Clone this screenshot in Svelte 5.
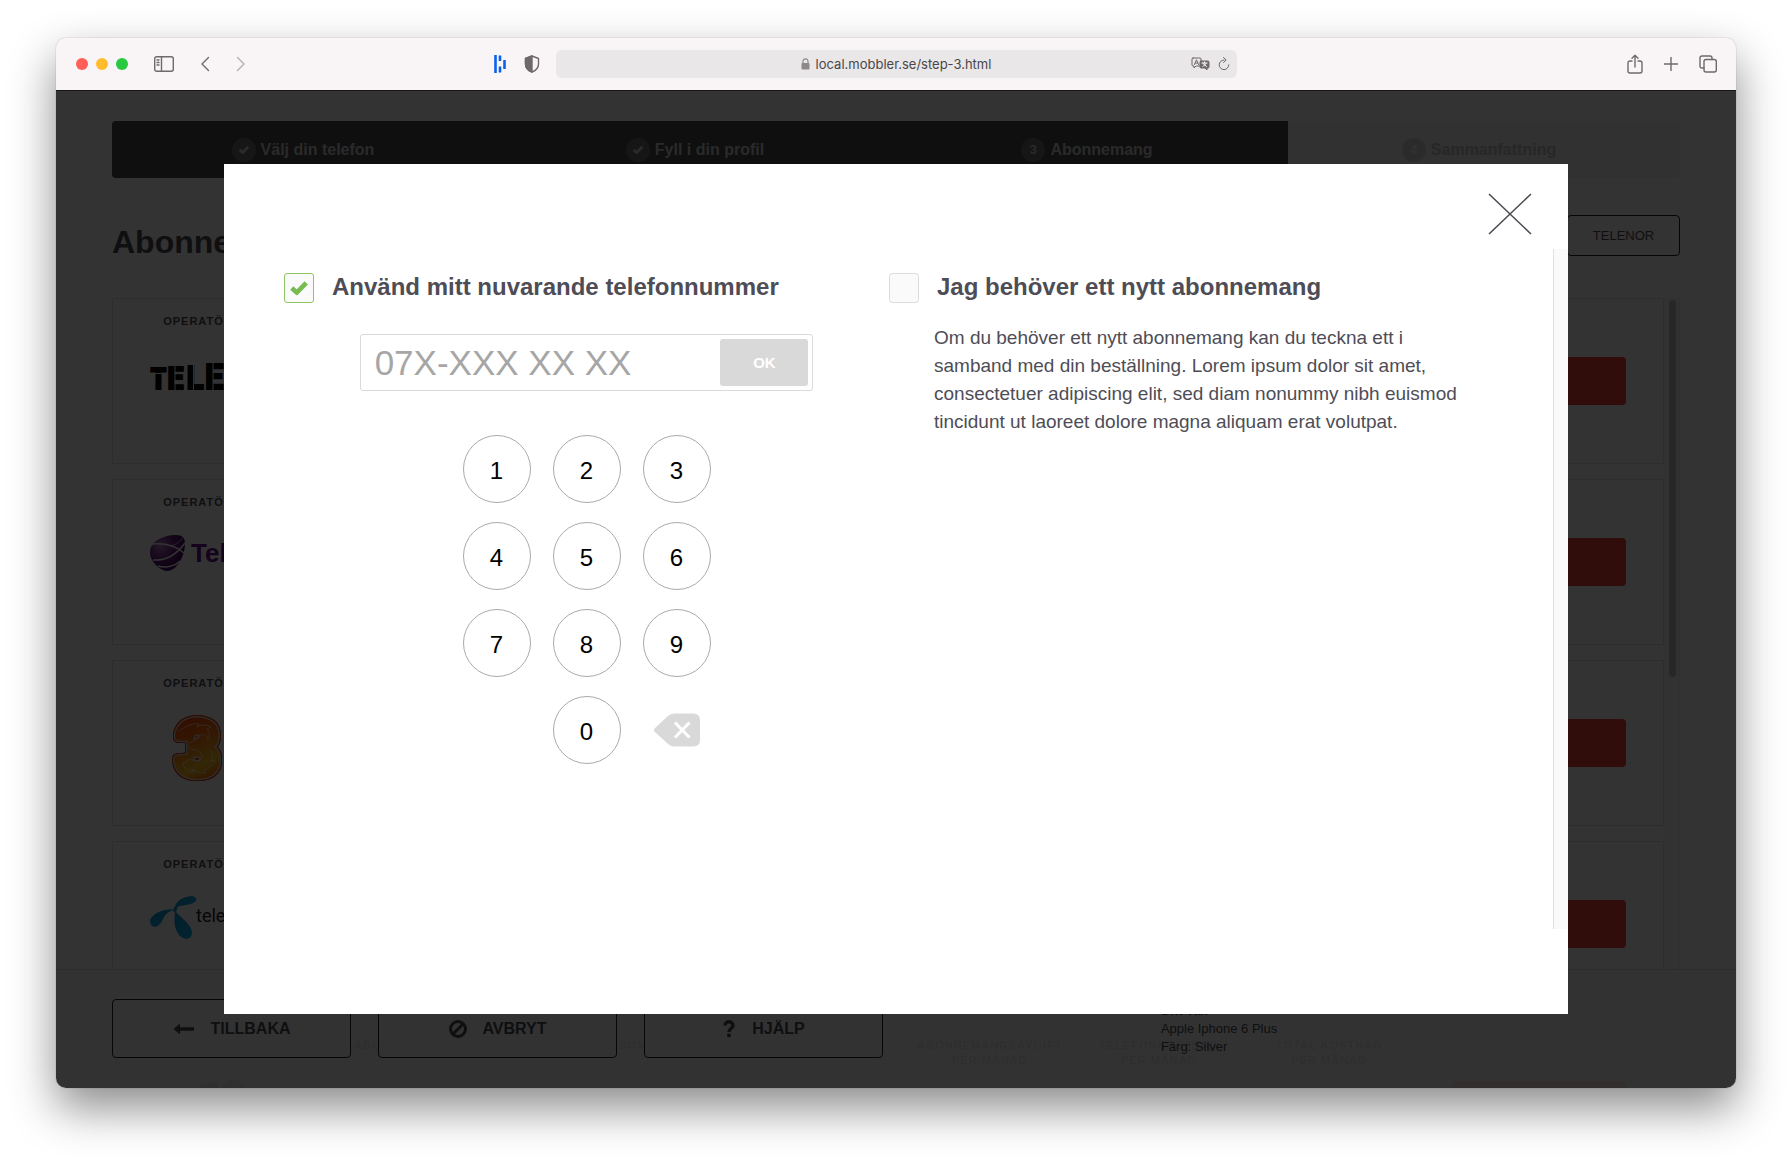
<script lang="ts">
  type Step = { label: string; done: boolean; active: boolean };

  const steps: Step[] = [
    { label: 'Välj din telefon', done: true, active: true },
    { label: 'Fyll i din profil', done: true, active: true },
    { label: 'Abonnemang', done: false, active: true },
    { label: 'Sammanfattning', done: false, active: false }
  ];

  const operators = ['tele2', 'telia', 'tre', 'telenor', 'other'];

  const columns = [
    'Abonnemang',
    'Vad som ingår',
    '',
    'Abonnemangsavgift\nper månad',
    'Telefonkostnad\nper månad',
    'Total kostnad\nper månad'
  ];

  const digits = ['1', '2', '3', '4', '5', '6', '7', '8', '9', '0'];

  let phone = $state('');
  let choice = $state('current');
  let open = $state(true);

  function press(digit: string) {
    if (phone.length < 10) phone += digit;
  }

  function erase() {
    phone = phone.slice(0, -1);
  }
</script>

{#snippet tick()}
  <svg class="tick" viewBox="0 0 18 14" aria-hidden="true">
    <path d="M2.5 7.2 L7 11.4 L15.5 2.6" fill="none" stroke="currentColor" stroke-width="4.2" stroke-linejoin="round" />
  </svg>
{/snippet}

{#snippet logo(name: string)}
  <svg class="logo" width="96" height="72" viewBox="0 0 96 72" aria-hidden="true">
    {#if name === 'tele2'}
      <text class="tele2" x="0" y="38" fill="#050505" stroke="#050505" stroke-width="2"><tspan font-size="28">T</tspan><tspan font-size="30">E</tspan><tspan font-size="32">L</tspan><tspan font-size="34">E</tspan><tspan font-size="36">2</tspan></text>
      <path d="M2 22.500 H16 M25 14 V40 M43.500 14 V40 M63 12 V40" stroke="#fff" stroke-width="1" />
    {:else if name === 'telia'}
      <defs>
        <radialGradient id="sphere" cx="0.3" cy="0.3" r="0.8">
          <stop offset="0" stop-color="#b57cc4" />
          <stop offset="0.5" stop-color="#6a1a80" />
          <stop offset="1" stop-color="#3a0050" />
        </radialGradient>
      </defs>
      <path d="M0 19 C1 9 14 3 26 3 C33 3 35 6 35 12 C35 22 28 39 17 39 C9 39 -1 28 0 19 Z" fill="url(#sphere)" />
      <path d="M2 12 C14 11 26 14 34 21 M3 28 C16 29 27 22 35 11 M8 34 C15 36 24 35 30 29" fill="none" stroke="#fff" stroke-width="1.500" />
      <path d="M20 14 C26 13 31 9 33 5" fill="none" stroke="#fff" stroke-opacity="0.6" />
      <text class="telia" x="41" y="30" font-size="26" fill="#6a0a8a">Telia</text>
    {:else if name === 'tre'}
      <defs>
        <linearGradient id="flame" x1="0" y1="0" x2="0.25" y2="1">
          <stop offset="0" stop-color="#ff2a00" />
          <stop offset="0.5" stop-color="#ff7a10" />
          <stop offset="0.8" stop-color="#ffc020" />
          <stop offset="1" stop-color="#ff6a00" />
        </linearGradient>
      </defs>
      <text class="tre" x="27" y="61" font-size="74" fill="url(#flame)" stroke="url(#flame)" stroke-width="9" stroke-linejoin="round">3</text>
      <path d="M28 19 C36 12 44 10 49 11 L47 14 C52 11 57 12 61 14 L57 16 C60 19 60 23 58 27 C57 22 53 20 48 23 C46 29 36 29 38 34 C42 38 53 36 52 44 C48 54 38 42 38 48 L33 50 C33 55 38 59 44 59 L42 56 C48 60 52 59 55 61 L54 57 C60 55 63 50 65 47 L61 48 C64 43 62 40 59 37" fill="none" stroke="#fff" stroke-opacity="0.6" stroke-width="1" />
    {:else if name === 'telenor'}
      <defs>
        <linearGradient id="petal" x1="0" y1="0" x2="1" y2="1">
          <stop offset="0" stop-color="#0a9ad0" />
          <stop offset="1" stop-color="#12b0f0" />
        </linearGradient>
      </defs>
      <g fill="url(#petal)">
        <path d="M25 14 C25 7 34 2 42 2 C48 3 48 8 41 10 C35 12 29 11 25 14 Z" />
        <path d="M24 16 C15 14 0 20 0 28 C1 35 9 34 12 27 C15 20 19 17 24 16 Z" />
        <path d="M25 17 C24 27 24 34 29 41 C33 46 42 47 42 38 C41 30 32 25 25 17 Z" />
        <path d="M23 17 C23 13 26 11 28 12 L26 19 Z" />
      </g>
      <text class="telenor" x="46" y="28" font-size="18" fill="#222">telenor</text>
    {:else}
      <path d="M50 9 L68 6 L69 30 H54 Z" fill="#777" />
      <circle cx="83" cy="16" r="12" fill="#777" />
    {/if}
  </svg>
{/snippet}

<div class="window">
  <header class="toolbar">
    <div class="side">
      <div class="lights"><i class="red"></i><i class="amber"></i><i class="green"></i></div>
      <button class="tool sidebar" aria-label="Sidebar">
        <svg width="20" height="16" viewBox="0 0 20 16"><rect x="0.700" y="0.700" width="18.600" height="14.600" rx="2" /><path d="M7.500 1 V15 M3 4 H5 M3 6.500 H5 M3 9 H5" /></svg>
      </button>
      <button class="tool" aria-label="Back">
        <svg width="10" height="16" viewBox="0 0 10 16"><path d="M8.500 1.500 L2 8 L8.500 14.500" /></svg>
      </button>
      <button class="tool faded" aria-label="Forward">
        <svg width="10" height="16" viewBox="0 0 10 16"><path d="M1.500 1.500 L8 8 L1.500 14.500" /></svg>
      </button>
    </div>
    <div class="center">
      <button class="tool" aria-label="Extension">
        <svg class="bars" width="14" height="20" viewBox="0 0 14 20"><path d="M1.500 1 V19 M6 1.500 V7 M6 12.500 V18.500 M10.500 6 V15" /></svg>
      </button>
      <button class="tool" aria-label="Privacy report">
        <svg width="16" height="18" viewBox="0 0 16 18"><path d="M8 1 L14.500 3.500 V9 C14.500 13 12 15.500 8 17 C4 15.500 1.500 13 1.500 9 V3.500 Z" /><path d="M8 1 V17 C4 15.500 1.500 13 1.500 9 V3.500 Z" fill="#6f696b" /></svg>
      </button>
      <div class="address">
        <span class="url">
          <svg width="9" height="12" viewBox="0 0 9 12"><rect x="0.500" y="5" width="8" height="6.500" rx="1" fill="#8d898b" /><path d="M2 5.500 V3.200 C2 0.200 7 0.200 7 3.200 V5.500" fill="none" stroke="#8d898b" stroke-width="1.200" /></svg>
          local.mobbler.se/step-3.html
        </span>
        <svg class="translate" width="19" height="14" viewBox="0 0 19 14"><path d="M2 1 H9 Q10 1 10 2 V8 Q10 9 9 9 H5 L3 11 V9 H2 Q1 9 1 8 V2 Q1 1 2 1 Z" /><path d="M3.500 7.500 L5.500 2.800 L7.500 7.500 M4.200 6 H6.800" /><path d="M10 4 H17 Q18 4 18 5 V10 Q18 11 17 11 H16 V13 L14 11 H10 Q9 11 9 10 V5 Q9 4 10 4 Z" fill="#6f696b" /><path d="M11 6 H16 M13.500 5 V6 M12 9.500 L15 6.500 M12 6.500 L15.500 9.500" stroke="#fff" /></svg>
        <svg width="12" height="14" viewBox="0 0 12 14"><path d="M6 3 A4.800 4.800 0 1 0 10.800 7.800 M5.500 0.500 L8.200 3 L5.500 5.500" /></svg>
      </div>
    </div>
    <div class="side end">
      <button class="tool" aria-label="Share">
        <svg width="16" height="20" viewBox="0 0 16 20"><path d="M5 7 H3 Q1 7 1 9 V17 Q1 19 3 19 H13 Q15 19 15 17 V9 Q15 7 13 7 H11 M8 13 V1.500 M5 4.300 L8 1.300 L11 4.300" /></svg>
      </button>
      <button class="tool" aria-label="New tab">
        <svg width="14" height="14" viewBox="0 0 14 14"><path d="M7 0 V14 M0 7 H14" /></svg>
      </button>
      <button class="tool" aria-label="Tab overview">
        <svg width="18" height="18" viewBox="0 0 18 18"><rect x="5" y="4.500" width="12.300" height="12.500" rx="2" /><path d="M5 13 H3 Q1 13 1 11 V3 Q1 1 3 1 H11 Q13 1 13 3 V4.500" /></svg>
      </button>
    </div>
  </header>

  <div class="page">
    <main class="content">
      <ol class="steps">
        {#each steps as step, i}
          <li class:active={step.active}>
            <span class="bullet">{#if step.done}{@render tick()}{:else}{i + 1}{/if}</span>
            {step.label}
          </li>
        {/each}
      </ol>

      <div class="title">
        <h1>Abonnemang</h1>
        <button class="filter">TELENOR</button>
      </div>

      <div class="list">
        <div class="cards">
          {#each operators as name}
            <article class="card">
              <div class="cell">
                <h2>Operatör</h2>
                {@render logo(name)}
              </div>
              {#each columns as column}
                <div class="cell"><h2>{column}</h2></div>
              {/each}
              <div class="cell action"><button class="choose" aria-label="Välj"></button></div>
            </article>
          {/each}
        </div>
        <div class="track"><div class="thumb"></div></div>
      </div>
    </main>

    <footer class="bottom">
      <button class="nav">
        <svg width="22" height="12" viewBox="0 0 22 12"><path d="M0.500 6 L7 0.500 V4.300 H21 V7.700 H7 V11.500 Z" /></svg>
        TILLBAKA
      </button>
      <button class="nav">
        <svg width="18" height="20" viewBox="0 0 18 20"><path d="M3 16 L15 4" stroke="currentColor" stroke-width="3" /><circle cx="9" cy="10" r="7.500" fill="none" stroke="currentColor" stroke-width="3" /></svg>
        AVBRYT
      </button>
      <button class="nav">
        <svg width="14" height="18" viewBox="0 0 14 18"><path d="M3 5.500 C3 0.500 11 0.500 11 5.500 C11 8.300 7 8.300 7 12" fill="none" stroke="currentColor" stroke-width="3.400" /><rect x="5.200" y="13.600" width="3.600" height="3.600" /></svg>
        HJÄLP
      </button>
      <div class="summary">
        <b>Ditt val:</b>
        <span>Apple Iphone 6 Plus</span>
        <span>Färg: Silver</span>
      </div>
    </footer>

    {#if open}
      <div class="overlay"></div>
      <div class="modal" role="dialog" aria-modal="true" aria-label="Telefonnummer">
        <div class="modal-head">
          <button class="close" aria-label="Stäng" onclick={() => (open = false)}>
            <svg width="44" height="42" viewBox="0 0 44 42"><path d="M1 1 L43 41 M43 1 L1 41" /></svg>
          </button>
        </div>
        <div class="modal-body">
          <div class="options">
            <section>
              <label class="option" for="current">
                <span class="box">
                  <input id="current" type="checkbox" checked={choice === 'current'} onchange={() => (choice = 'current')} />
                  {#if choice === 'current'}{@render tick()}{/if}
                </span>
                Använd mitt nuvarande telefonnummer
              </label>
              <form class="number" onsubmit={(e) => e.preventDefault()}>
                <input type="tel" aria-label="Telefonnummer" placeholder="07X-XXX XX XX" bind:value={phone} />
                <button type="submit">OK</button>
              </form>
              <div class="keypad">
                {#each digits as digit}
                  <button class="key" class:zero={digit === '0'} onclick={() => press(digit)}>{digit}</button>
                {/each}
                <button class="erase" aria-label="Radera" onclick={erase}>
                  <svg width="46" height="34" viewBox="0 0 46 34"><path d="M0.500 18.500 Q-0.500 17 0.500 15.500 L14 3 Q17 0.500 20 0.500 H39 Q46 0.500 46 7 V27 Q46 33.500 39 33.500 H20 Q17 33.500 14 31 Z" fill="#d9d9d9" /><path d="M21 9.500 L35.500 24.500 M35.500 9.500 L21 24.500" stroke="#fff" stroke-width="3" /></svg>
                </button>
              </div>
            </section>
            <section>
              <label class="option" for="new">
                <span class="box">
                  <input id="new" type="checkbox" checked={choice === 'new'} onchange={() => (choice = 'new')} />
                  {#if choice === 'new'}{@render tick()}{/if}
                </span>
                Jag behöver ett nytt abonnemang
              </label>
              <p>
                Om du behöver ett nytt abonnemang kan du teckna ett i samband med din beställning. Lorem ipsum dolor sit
                amet, consectetuer adipiscing elit, sed diam nonummy nibh euismod tincidunt ut laoreet dolore magna
                aliquam erat volutpat.
              </p>
            </section>
          </div>
          <div class="modal-track"></div>
        </div>
      </div>
    {/if}
  </div>
</div>

<style>
  :global(body) {
    margin: 0;
    background: #fff;
  }

  :global(#app) {
    padding: 38px 56px 74px;
  }

  .window {
    display: flex;
    flex-direction: column;
    height: calc(100vh - 112px);
    border-radius: 10px;
    overflow: hidden;
    background: #fff;
    box-shadow: 0 0 1px rgba(0, 0, 0, 0.5), 0 20px 46px rgba(0, 0, 0, 0.46);
    font-family: "Helvetica Neue", "Liberation Sans", Arial, sans-serif;
    color: #4e4d56;
  }

  button {
    padding: 0;
    border: none;
    background: none;
    font-family: inherit;
    color: inherit;
    cursor: pointer;
  }

  svg {
    display: block;
    flex-shrink: 0;
  }

  /* Browser toolbar */
  .toolbar {
    display: flex;
    align-items: center;
    height: 52px;
    padding: 0 19px 0 20px;
    background: #f9f5f6;
    border-bottom: 1px solid #161616;
    flex-shrink: 0;
  }

  .side {
    display: flex;
    align-items: center;
    gap: 26px;
    flex: 1;
  }

  .side.end {
    justify-content: flex-end;
    gap: 21px;
  }

  .lights {
    display: flex;
    gap: 8px;
  }

  .lights i {
    width: 12px;
    height: 12px;
    border-radius: 50%;
  }

  .red {
    background: #ff5f57;
  }

  .amber {
    background: #febc2e;
  }

  .green {
    background: #28c840;
  }

  .tool svg,
  .address > svg {
    fill: none;
    stroke: #6f696b;
    stroke-width: 1.4;
    stroke-linecap: round;
    stroke-linejoin: round;
  }

  .tool .bars {
    stroke: #0a63f0;
    stroke-width: 2.6;
    stroke-linecap: butt;
  }

  .faded {
    opacity: 0.5;
  }

  .address > svg {
    stroke-width: 1;
  }

  .center {
    display: flex;
    align-items: center;
    gap: 16px;
    box-sizing: border-box;
    width: 46%;
    margin-right: 74px;
    padding-left: 12px;
  }

  .address {
    display: flex;
    align-items: center;
    gap: 8px;
    flex: 1;
    height: 28px;
    padding: 0 7px;
    border-radius: 6px;
    background: #e9e7e8;
  }

  .url {
    display: flex;
    align-items: center;
    justify-content: center;
    gap: 6px;
    flex: 1;
    padding-left: 46px;
    font-family: Inter, sans-serif;
    font-size: 13px;
    color: #4a4648;
  }

  /* Page behind the dialog */
  .page {
    position: relative;
    flex: 1;
    min-height: 0;
    overflow: hidden;
  }

  .content {
    display: flex;
    flex-direction: column;
    box-sizing: border-box;
    height: 100%;
    padding: 30px 56px 0;
  }

  .steps {
    display: flex;
    flex-shrink: 0;
    height: 57px;
    margin: 0 0 37px;
    padding: 0;
    border-radius: 4px;
    overflow: hidden;
    list-style: none;
    background: #f2f2f2;
    font-size: 16px;
    font-weight: 700;
    color: #c0c0c0;
  }

  .steps li {
    display: flex;
    align-items: center;
    justify-content: center;
    gap: 5px;
    flex: 1;
    padding-right: 10px;
  }

  .steps li.active {
    background: #4b4b4b;
    color: #d0d0d0;
  }

  .bullet {
    display: grid;
    place-items: center;
    width: 24px;
    height: 24px;
    border-radius: 50%;
    background: #d8d8d8;
    color: #f4f4f4;
    font-size: 13px;
  }

  .active .bullet {
    background: #707070;
    color: #d0d0d0;
  }

  .bullet .tick {
    width: 12px;
  }

  .title {
    display: flex;
    align-items: flex-start;
    justify-content: space-between;
    flex-shrink: 0;
    margin-bottom: 40px;
  }

  h1 {
    margin: 0;
    padding-top: 11px;
    font-size: 32px;
    line-height: 32px;
  }

  .filter {
    width: 113px;
    height: 41px;
    border: 1px solid #222;
    border-radius: 4px;
    font-size: 13px;
  }

  .list {
    display: flex;
    flex: 1;
    min-height: 0;
    overflow: hidden;
  }

  .cards {
    display: flex;
    flex-direction: column;
    gap: 15px;
    flex: 1;
  }

  .card {
    display: grid;
    grid-template-columns: 170fr 233fr 249fr 141fr 168fr 170fr 171fr 249fr;
    box-sizing: border-box;
    height: 166px;
    flex-shrink: 0;
    border: 1px solid #e2e2e2;
  }

  .cell {
    display: flex;
    flex-direction: column;
    align-items: center;
    min-width: 0;
    padding: 15px 12px 0;
    text-align: center;
  }

  .cell + .cell {
    border-left: 1px solid #eee;
  }

  h2 {
    margin: 0;
    font-size: 11px;
    line-height: 15px;
    letter-spacing: 1px;
    text-transform: uppercase;
    white-space: pre;
  }

  .logo {
    margin-top: 22px;
  }

  .tele2 {
    font-family: "DejaVu Sans Mono", monospace;
    font-weight: 700;
  }

  .telia {
    font-weight: 700;
  }

  .tre {
    font-weight: 700;
    paint-order: stroke;
    filter: drop-shadow(1px 0 0 #ddd) drop-shadow(-1px 0 0 #ddd) drop-shadow(0 1px 0 #ddd) drop-shadow(0 -1px 0 #ddd)
      drop-shadow(1px 0 0 #e04010) drop-shadow(-1px 0 0 #e04010) drop-shadow(0 1px 0 #e04010) drop-shadow(0 -1px 0 #e04010);
  }

  .telenor {
    font-family: Roboto, sans-serif;
  }

  .action {
    padding: 58px 37px 0;
    align-items: stretch;
  }

  .choose {
    height: 48px;
    border-radius: 4px;
    background: #f04132;
  }

  .track {
    box-sizing: border-box;
    width: 16px;
    padding: 2px 3px 2px 5px;
    border-right: 1px solid #eee;
    background: #fafafa;
  }

  .thumb {
    height: 377px;
    border-radius: 4px;
    background: #c4c4c4;
  }

  .bottom {
    position: absolute;
    left: 0;
    right: 0;
    bottom: 0;
    display: flex;
    gap: 27px;
    padding: 29px 56px 30px;
    border-top: 1px solid #e2e2e2;
    background: rgba(251, 251, 251, 0.88);
  }

  .nav {
    display: flex;
    align-items: center;
    justify-content: center;
    gap: 16px;
    box-sizing: border-box;
    width: 239px;
    height: 59px;
    border: 1px solid #222;
    border-radius: 4px;
    background: #fbfbfb;
    font-size: 16px;
    font-weight: 700;
  }

  .nav svg {
    fill: currentColor;
  }

  .summary {
    display: flex;
    flex-direction: column;
    margin-left: 16%;
    padding-top: 3px;
    font-size: 13px;
    line-height: 18px;
  }

  .overlay {
    position: absolute;
    inset: 0;
    background: rgba(0, 0, 0, 0.8);
  }

  /* Dialog */
  .modal {
    position: absolute;
    inset: 73px 10% 74px;
    display: flex;
    flex-direction: column;
    padding-bottom: 85px;
    background: #fff;
  }

  .modal-head {
    display: flex;
    justify-content: flex-end;
    padding: 29px 36px 14px;
  }

  .close svg {
    fill: none;
    stroke: #4e4d56;
    stroke-width: 1.6;
  }

  .modal-body {
    display: flex;
    flex: 1;
    min-height: 0;
  }

  .options {
    display: grid;
    grid-template-columns: 1fr 1fr;
    flex: 1;
    padding: 24px 59px 0 60px;
  }

  .modal-track {
    box-sizing: border-box;
    width: 15px;
    border-left: 1px solid #e0e0e0;
    background: #fafafa;
  }

  .option {
    display: flex;
    align-items: flex-start;
    gap: 18px;
    font-size: 24px;
    line-height: 28px;
    font-weight: 700;
    white-space: nowrap;
  }

  .box {
    display: grid;
    place-items: center;
    width: 30px;
    height: 30px;
    color: #78bb50;
  }

  .box > :global(*) {
    grid-area: 1 / 1;
  }

  .box input {
    appearance: none;
    box-sizing: border-box;
    width: 30px;
    height: 30px;
    margin: 0;
    border: 1px solid #dcdcdc;
    border-radius: 3px;
    background: #fafafa;
  }

  .box input:checked {
    border-color: #8cc466;
  }

  .box .tick {
    width: 20px;
    pointer-events: none;
  }

  .number {
    display: flex;
    box-sizing: border-box;
    width: 75%;
    height: 57px;
    margin: 31px auto 44px;
    padding: 4px;
    border: 1px solid #d9d9d9;
    border-radius: 3px;
  }

  .number input {
    flex: 1;
    min-width: 0;
    padding: 0 10px;
    border: none;
    outline: none;
    background: none;
    font-family: inherit;
    font-size: 35px;
    color: #4e4d56;
  }

  .number input::placeholder {
    color: #a6a6a6;
  }

  .number button {
    width: 88px;
    border-radius: 3px;
    background: #d9d9d9;
    font-size: 15px;
    font-weight: 700;
    color: #fff;
  }

  .keypad {
    display: grid;
    grid-template-columns: repeat(3, 68px);
    gap: 19px 22px;
    justify-content: center;
  }

  .key {
    height: 68px;
    padding-top: 3px;
    border: 1px solid #aaa;
    border-radius: 50%;
    font-size: 24px;
    color: #000;
  }

  .zero {
    grid-column: 2;
  }

  .erase {
    display: grid;
    place-items: center;
  }

  p {
    margin: 21px 0 0;
    padding: 0 20px 0 45px;
    font-size: 19px;
    line-height: 28px;
  }
</style>
